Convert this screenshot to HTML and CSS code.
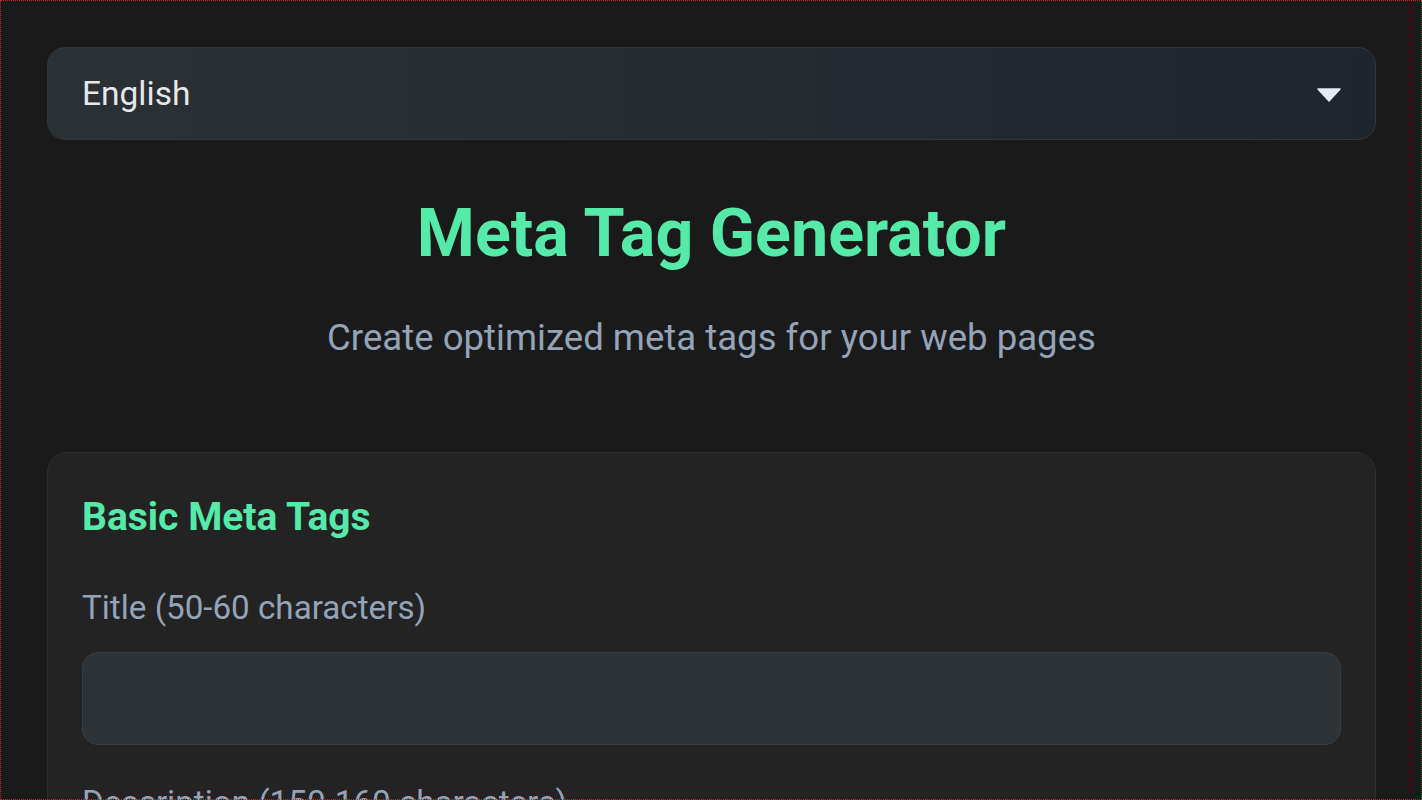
FILE: index.html
```html
<!DOCTYPE html>
<html lang="en">
<head>
<meta charset="utf-8">
<title>Meta Tag Generator</title>
<link rel="stylesheet" href="styles.css">
</head>
<body>
<div class="page">
  <div class="lang-select">
    <span class="lang-value">English</span>
    <svg class="caret" width="24" height="14" viewBox="0 0 24 14"><path d="M1 1 H23 L12 13 Z" fill="#e5e9f0" stroke="#e5e9f0" stroke-width="1.5" stroke-linejoin="round"/></svg>
  </div>
  <header class="hero">
    <h1 class="title">Meta Tag Generator</h1>
    <p class="subtitle">Create optimized meta tags for your web pages</p>
  </header>
  <section class="card">
    <h2 class="card-title">Basic Meta Tags</h2>
    <div class="field">
      <label class="label">Title (50-60 characters)</label>
      <div class="input"></div>
    </div>
    <div class="field">
      <label class="label">Description (150-160 characters)</label>
      <div class="input"></div>
    </div>
  </section>
</div>
</body>
</html>
```

FILE: styles.css
```css
html, body {
  margin: 0;
  padding: 0;
  background: #1a1a1a;
  height: 100%;
  overflow: hidden;
}
body {
  font-family: Roboto, "Liberation Sans", sans-serif;
  outline: 1px dotted #c0262b;
  outline-offset: -1px;
}
.page {
  padding: 47px 46px 0 47px;
}
.lang-select {
  height: 93px;
  box-sizing: border-box;
  border: 1px solid #30383d;
  border-radius: 18px;
  background: linear-gradient(90deg, #2a3034 0%, #252b31 50%, #1f252d 100%);
  display: flex;
  align-items: center;
  justify-content: space-between;
  padding: 0 34px 0 34px;
}
.lang-value {
  color: #e5e7eb;
  font-size: 33.5px;
}
.caret {
  display: block;
  margin-top: 2px;
}
.hero {
  text-align: center;
  padding-top: 53px;
}
.title {
  margin: 0;
  color: #55eaa9;
  font-size: 66.4px;
  font-weight: 700;
  line-height: 80px;
}
.subtitle {
  margin: 42px 0 0;
  color: #94a3b8;
  font-size: 36.6px;
  line-height: 46px;
}
.card {
  margin-top: 91px;
  background: #232323;
  border: 1px solid #2e2e2e;
  border-radius: 20px;
  padding: 40px 34px 40px 34px;
  display: flex;
  flex-direction: column;
}
.card-title {
  margin: 0 0 9px;
  color: #55eaa9;
  font-size: 39px;
  font-weight: 700;
  line-height: 48px;
}
.field {
  margin-top: 38px;
}
.label {
  display: block;
  color: #94a3b8;
  font-size: 33.2px;
  line-height: 40px;
}
.input {
  margin-top: 24px;
  height: 93px;
  box-sizing: border-box;
  background: #2d3336;
  border: 1px solid #373e42;
  border-radius: 16px;
}
```
